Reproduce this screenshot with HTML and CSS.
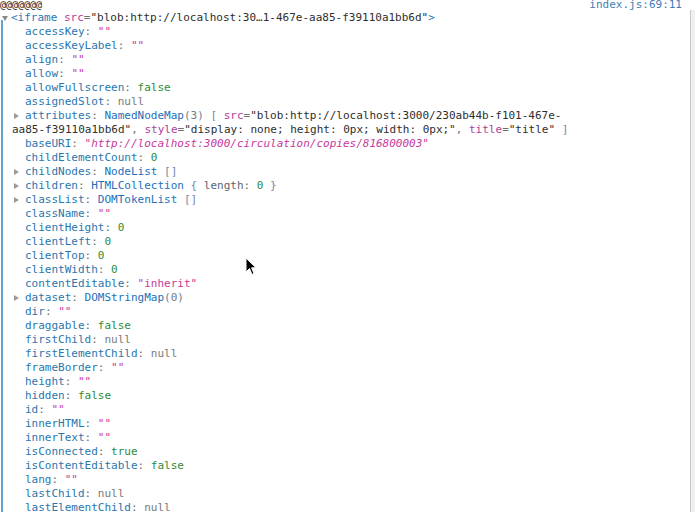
FILE: index.html
```html
<!DOCTYPE html>
<html>
<head>
<meta charset="utf-8">
<link rel="stylesheet" href="styles.css">
</head>
<body>
<div class="console">
  <div class="msg-head"><span class="clip">@@@@@@@</span><span class="loc">index.js:69:11</span></div>
  <div class="tree">
    <div class="row root"><span class="slot"><span class="tri-down"></span></span><span class="tag">&lt;iframe</span> <span class="attr">src</span><span class="p">=</span><span class="val">"blob:http://localhost:30…1-467e-aa85-f39110a1bb6d"</span><span class="tag">&gt;</span></div>
    <div class="children">
      <div class="row"><span class="slot"></span><span class="key">accessKey</span><span class="p">: </span><span class="str">""</span></div>
      <div class="row"><span class="slot"></span><span class="key">accessKeyLabel</span><span class="p">: </span><span class="str">""</span></div>
      <div class="row"><span class="slot"></span><span class="key">align</span><span class="p">: </span><span class="str">""</span></div>
      <div class="row"><span class="slot"></span><span class="key">allow</span><span class="p">: </span><span class="str">""</span></div>
      <div class="row"><span class="slot"></span><span class="key">allowFullscreen</span><span class="p">: </span><span class="bool">false</span></div>
      <div class="row"><span class="slot"></span><span class="key">assignedSlot</span><span class="p">: </span><span class="null">null</span></div>
      <div class="row"><span class="slot"><span class="tri"></span></span><span class="key">attributes</span><span class="p">: </span><span class="cls">NamedNodeMap</span><span class="cnt">(3)</span> <span class="br">[</span> <span class="attr">src</span><span class="p">=</span><span class="val">"blob:http://localhost:3000/230ab44b-f101-467e-</span></div>
      <div class="wrap"><span class="val">aa85-f39110a1bb6d"</span><span class="p">, </span><span class="attr">style</span><span class="p">=</span><span class="val">"display: none; height: 0px; width: 0px;"</span><span class="p">, </span><span class="attr">title</span><span class="p">=</span><span class="val">"title"</span> <span class="br">]</span></div>
      <div class="row"><span class="slot"></span><span class="key">baseURI</span><span class="p">: </span><span class="str url">"http://localhost:3000/circulation/copies/816800003"</span></div>
      <div class="row"><span class="slot"></span><span class="key">childElementCount</span><span class="p">: </span><span class="num">0</span></div>
      <div class="row"><span class="slot"><span class="tri"></span></span><span class="key">childNodes</span><span class="p">: </span><span class="cls">NodeList</span> <span class="br">[]</span></div>
      <div class="row"><span class="slot"><span class="tri"></span></span><span class="key">children</span><span class="p">: </span><span class="cls">HTMLCollection</span> <span class="br">{</span> <span class="sub">length</span><span class="p">: </span><span class="num">0</span> <span class="br">}</span></div>
      <div class="row"><span class="slot"><span class="tri"></span></span><span class="key">classList</span><span class="p">: </span><span class="cls">DOMTokenList</span> <span class="br">[]</span></div>
      <div class="row"><span class="slot"></span><span class="key">className</span><span class="p">: </span><span class="str">""</span></div>
      <div class="row"><span class="slot"></span><span class="key">clientHeight</span><span class="p">: </span><span class="num">0</span></div>
      <div class="row"><span class="slot"></span><span class="key">clientLeft</span><span class="p">: </span><span class="num">0</span></div>
      <div class="row"><span class="slot"></span><span class="key">clientTop</span><span class="p">: </span><span class="num">0</span></div>
      <div class="row"><span class="slot"></span><span class="key">clientWidth</span><span class="p">: </span><span class="num">0</span></div>
      <div class="row"><span class="slot"></span><span class="key">contentEditable</span><span class="p">: </span><span class="str">"inherit"</span></div>
      <div class="row"><span class="slot"><span class="tri"></span></span><span class="key">dataset</span><span class="p">: </span><span class="cls">DOMStringMap</span><span class="cnt">(0)</span></div>
      <div class="row"><span class="slot"></span><span class="key">dir</span><span class="p">: </span><span class="str">""</span></div>
      <div class="row"><span class="slot"></span><span class="key">draggable</span><span class="p">: </span><span class="bool">false</span></div>
      <div class="row"><span class="slot"></span><span class="key">firstChild</span><span class="p">: </span><span class="null">null</span></div>
      <div class="row"><span class="slot"></span><span class="key">firstElementChild</span><span class="p">: </span><span class="null">null</span></div>
      <div class="row"><span class="slot"></span><span class="key">frameBorder</span><span class="p">: </span><span class="str">""</span></div>
      <div class="row"><span class="slot"></span><span class="key">height</span><span class="p">: </span><span class="str">""</span></div>
      <div class="row"><span class="slot"></span><span class="key">hidden</span><span class="p">: </span><span class="bool">false</span></div>
      <div class="row"><span class="slot"></span><span class="key">id</span><span class="p">: </span><span class="str">""</span></div>
      <div class="row"><span class="slot"></span><span class="key">innerHTML</span><span class="p">: </span><span class="str">""</span></div>
      <div class="row"><span class="slot"></span><span class="key">innerText</span><span class="p">: </span><span class="str">""</span></div>
      <div class="row"><span class="slot"></span><span class="key">isConnected</span><span class="p">: </span><span class="bool">true</span></div>
      <div class="row"><span class="slot"></span><span class="key">isContentEditable</span><span class="p">: </span><span class="bool">false</span></div>
      <div class="row"><span class="slot"></span><span class="key">lang</span><span class="p">: </span><span class="str">""</span></div>
      <div class="row"><span class="slot"></span><span class="key">lastChild</span><span class="p">: </span><span class="null">null</span></div>
      <div class="row"><span class="slot"></span><span class="key">lastElementChild</span><span class="p">: </span><span class="null">null</span></div>
    </div>
  </div>
</div>
<div class="scrollbar"></div>
<svg class="cursor" width="12" height="20" viewBox="0 0 12 20"><path d="M1 1 L1 15 L4.5 11.5 L7 17.5 L9 16.6 L6.6 10.8 L11 10.8 Z" fill="#000" stroke="#fff" stroke-width="1"/></svg>
</body>
</html>
```
FILE: styles.css
```css
html, body {
  margin: 0;
  padding: 0;
  background: #fff;
  overflow: hidden;
}
body {
  width: 695px;
  height: 512px;
  position: relative;
  font-family: "DejaVu Sans Mono", monospace;
  font-size: 11px;
  color: #333;
}
.msg-head {
  display: flex;
  justify-content: space-between;
  height: 11px;
  line-height: 9px;
  padding-right: 13px;
  overflow: hidden;
  white-space: pre;
}
.clip {
  font-size: 10px;
  color: #222;
}
.loc {
  color: #3f7cb6;
}
.row, .wrap {
  height: 14px;
  line-height: 14px;
  white-space: pre;
}
.slot {
  display: inline-flex;
  align-items: center;
  vertical-align: top;
  width: 13px;
  height: 14px;
}
.root .slot {
  width: 11px;
}
.tri {
  width: 0;
  height: 0;
  margin-left: 2px;
  border-left: 5px solid #9a9a9a;
  border-top: 3.5px solid transparent;
  border-bottom: 3.5px solid transparent;
}
.tri-down {
  width: 0;
  height: 0;
  margin-left: 2px;
  margin-top: 1px;
  border-top: 5px solid #8a8a8a;
  border-left: 3.5px solid transparent;
  border-right: 3.5px solid transparent;
}
.children {
  margin-left: 1px;
  border-left: 2px solid #5fa3cf;
  margin-top: -5px;
  padding-top: 5px;
}
.children .row,
.children .wrap {
  padding-left: 9px;
}
.tag { color: #2b76b4; }
.attr { color: #b23d9a; }
.val { color: #2e2e2e; }
.key { color: #2a76ad; }
.p { color: #6f6f6f; }
.str { color: #c73a9c; }
.url { font-style: italic; }
.bool, .num { color: #2f8a37; }
.null { color: #7a7a7a; }
.cls { color: #2470b8; }
.cnt { color: #6f7d8c; }
.br { color: #7289a6; }
.sub { color: #5a6470; }
.scrollbar {
  position: absolute;
  right: 0;
  top: 10px;
  bottom: 0;
  width: 4px;
  background: #f0f0f0;
  border-left: 1px solid #c8c8c8;
}
.cursor {
  position: absolute;
  left: 245px;
  top: 257px;
}
```
